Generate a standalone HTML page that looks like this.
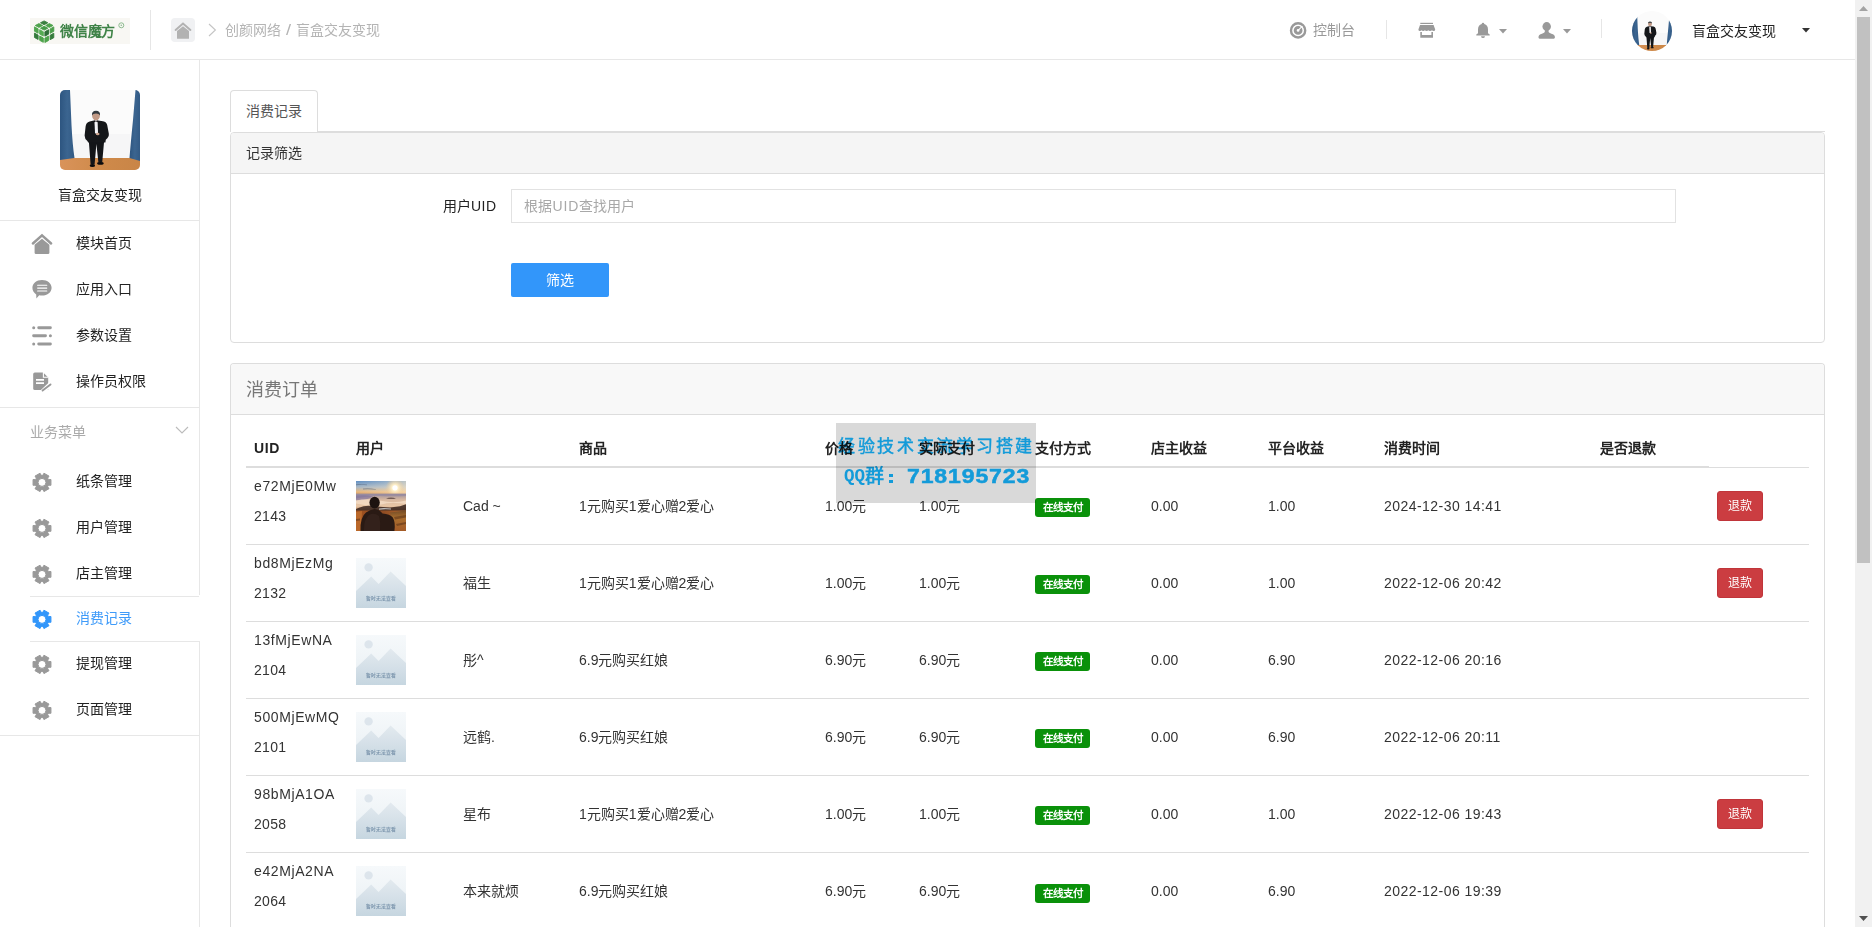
<!DOCTYPE html>
<html lang="zh-CN">
<head>
<meta charset="utf-8">
<title>消费记录 - 盲盒交友变现</title>
<style>
*{box-sizing:border-box;margin:0;padding:0}
html,body{width:1872px;height:927px;overflow:hidden;background:#fff}
body{position:relative;font-family:"Liberation Sans",sans-serif;font-size:14px;color:#222;line-height:20px}
.abs{position:absolute}
.t{position:absolute;white-space:nowrap;line-height:20px;height:20px}
svg{display:block}
/* header */
#hdr{position:absolute;left:0;top:0;width:1855px;height:60px;border-bottom:1px solid #e7e7e7;background:#fff}
.vdiv{position:absolute;width:1px;background:#e6e6e6}
.gray{color:#b4b4b4}
/* sidebar */
#side{position:absolute;left:0;top:60px;width:200px;height:867px;border-right:1px solid #e7e7e7;background:#fff}
.mi{position:absolute;left:0;width:199px;height:46px}
.mi .ic{position:absolute;left:31px;top:12px;width:22px;height:22px}
.mi .tx{position:absolute;left:76px;top:13px;line-height:20px;font-size:14px;color:#222;white-space:nowrap}
.hl{position:absolute;height:1px;background:#e7e7e7}
/* scrollbar */
#sb{position:absolute;left:1855px;top:0;width:17px;height:927px;background:#f1f1f1}
#sb .th{position:absolute;left:2px;top:17px;width:13px;height:546px;background:#c1c1c1}

/* main */
#tab{position:absolute;left:230px;top:90px;width:88px;height:42px;border:1px solid #ddd;border-bottom:none;border-radius:4px 4px 0 0;background:#fff;z-index:2}
#navline{position:absolute;left:230px;top:131px;width:1595px;height:1px;background:#ddd}
.panel{position:absolute;left:230px;width:1595px;border:1px solid #ddd;border-radius:4px;background:#fff}
.ph{border-bottom:1px solid #ddd;background:#f5f5f5;border-radius:3px 3px 0 0}
#inp{position:absolute;left:280px;top:56px;width:1165px;height:34px;border:1px solid #e2e2e2;background:#fff}
#btn{position:absolute;left:280px;top:130px;width:98px;height:34px;border-radius:2px;background:#3296fa;color:#fff;text-align:center;line-height:34px}
table{border-collapse:collapse;table-layout:fixed;position:absolute;left:15px;top:66px;width:1563px}
th{height:36px;padding:8px;text-align:left;font-weight:bold;color:#222;border-bottom:2px solid #ddd;line-height:20px;white-space:nowrap;vertical-align:bottom}
td{height:77px;padding:8px;border-top:1px solid #ddd;line-height:20px;color:#333;vertical-align:middle;white-space:nowrap}
td p{margin:0 0 10px;height:20px;letter-spacing:0.3px}
td p.u{letter-spacing:0.6px}
.dt{letter-spacing:0.45px}
.nm{letter-spacing:0.25px}
.ph2{height:51px;border-bottom:1px solid #ddd;background:#f8f8f8;border-radius:3px 3px 0 0}
.av{display:block;width:50px;height:50px}
.lb{display:inline-block;position:relative;top:1px;left:0;width:55px;height:19px;border-radius:3px;background:#0a910a;color:#fff;font-size:10.5px;font-weight:bold;line-height:18px;text-align:center;vertical-align:middle}
.rb{display:inline-block;width:46px;height:30px;border-radius:3px;background:#cb3d41;border:1px solid #c0353a;color:#fff;font-size:12px;line-height:28px;text-align:center;vertical-align:middle}
#wm{position:absolute;left:836px;top:423px;width:200px;height:80px;background:rgba(0,0,0,0.15)}
.wmt{color:#16b6ff;mix-blend-mode:multiply}
.wmd{background:#16b6ff;mix-blend-mode:multiply}
</style>
</head>
<body>

<!-- ================= HEADER ================= -->
<div id="hdr">
  <!-- logo -->
  <div class="abs" style="left:30px;top:18px;width:100px;height:26px;background:#f8f7f3">
    <svg class="abs" style="left:0;top:0" width="28" height="26" viewBox="0 0 28 26"><polygon points="14.11,2.91 17.78,4.80 14.14,6.69 10.47,4.80" fill="#3a7f40" stroke="#3a7f40" stroke-width="0.9" stroke-linejoin="round"/><polygon points="19.36,5.61 23.03,7.50 19.39,9.39 15.72,7.50" fill="#4fa34d" stroke="#4fa34d" stroke-width="0.9" stroke-linejoin="round"/><polygon points="8.91,5.61 12.58,7.50 8.94,9.39 5.27,7.50" fill="#4fa34d" stroke="#4fa34d" stroke-width="0.9" stroke-linejoin="round"/><polygon points="14.16,8.31 17.83,10.20 14.19,12.09 10.52,10.20" fill="#469b48" stroke="#469b48" stroke-width="0.9" stroke-linejoin="round"/><polygon points="4.48,8.87 8.12,10.86 8.12,15.23 4.48,13.24" fill="#50a54e" stroke="#50a54e" stroke-width="0.9" stroke-linejoin="round"/><polygon points="9.68,11.71 13.32,13.71 13.32,18.09 9.68,16.09" fill="#55aa52" stroke="#55aa52" stroke-width="0.9" stroke-linejoin="round"/><polygon points="4.48,15.11 8.12,17.11 8.12,21.48 4.48,19.49" fill="#347a3b" stroke="#347a3b" stroke-width="0.9" stroke-linejoin="round"/><polygon points="9.68,17.96 13.32,19.96 13.32,24.34 9.68,22.34" fill="#4ca24a" stroke="#4ca24a" stroke-width="0.9" stroke-linejoin="round"/><polygon points="14.89,13.72 18.56,11.73 18.56,16.18 14.89,18.17" fill="#2e6f37" stroke="#2e6f37" stroke-width="0.9" stroke-linejoin="round"/><polygon points="20.14,10.88 23.81,8.88 23.81,13.32 20.14,15.32" fill="#4a9e49" stroke="#4a9e49" stroke-width="0.9" stroke-linejoin="round"/><polygon points="14.89,20.07 18.56,18.08 18.56,22.52 14.89,24.52" fill="#4da34b" stroke="#4da34b" stroke-width="0.9" stroke-linejoin="round"/><polygon points="20.14,17.22 23.81,15.23 23.81,19.68 20.14,21.67" fill="#357c3c" stroke="#357c3c" stroke-width="0.9" stroke-linejoin="round"/></svg>
    <div class="t" style="left:30px;top:2.5px;font-size:14px;font-weight:bold;color:#3f8347;letter-spacing:-0.25px">微信魔方</div>
    <svg class="abs" style="left:87.5px;top:4px" width="7" height="7" viewBox="0 0 7 7"><circle cx="3.3" cy="3.3" r="2.5" fill="none" stroke="#8dbb8f" stroke-width="1"/><circle cx="3.3" cy="3.3" r="0.8" fill="#8dbb8f"/></svg>
  </div>
  <div class="vdiv" style="left:150px;top:10px;height:40px"></div>
  <!-- home -->
  <div class="abs" style="left:171px;top:18px;width:24px;height:24px;border-radius:4px;background:#f0f1f3">
    <svg class="abs" style="left:3px;top:3px" width="18" height="18" viewBox="0 0 18 18">
      <path d="M1.6,8.9 L9,2.5 L16.4,8.9" fill="none" stroke="#b2b2b2" stroke-width="2" stroke-linecap="round" stroke-linejoin="miter"/>
      <path d="M3,10 L9,5.2 L15,10 V17.2 Q15,17.8 14.4,17.8 H3.6 Q3,17.8 3,17.2 Z" fill="#b2b2b2"/>
    </svg>
  </div>
  <svg class="abs" style="left:207px;top:23px" width="10" height="14" viewBox="0 0 10 14"><path d="M2,1 L8.4,7 L2,13" fill="none" stroke="#c4c4c4" stroke-width="1.1"/></svg>
  <div class="t gray" style="left:225px;top:20px">创颜网络</div>
  <div class="t gray" style="left:285.5px;top:20px;transform:scaleX(1.3);transform-origin:0 50%">/</div>
  <div class="t gray" style="left:296px;top:20px">盲盒交友变现</div>

  <!-- right tools -->
  <svg class="abs" style="left:1289px;top:22px" width="18" height="17" viewBox="0 0 18 17">
    <circle cx="9.1" cy="8.4" r="7.1" fill="none" stroke="#999" stroke-width="2.4"/>
    <circle cx="9.1" cy="8.4" r="2.9" fill="none" stroke="#999" stroke-width="3"/>
    <path d="M9.1,8.4 L13.4,4.1" stroke="#fff" stroke-width="1.1"/>
  </svg>
  <div class="t" style="left:1313px;top:20px;color:#999">控制台</div>
  <div class="vdiv" style="left:1386px;top:20px;height:19px"></div>
  <!-- shop -->
  <svg class="abs" style="left:1418px;top:22px" width="18" height="17" viewBox="0 0 18 17">
    <rect x="2.3" y="0.8" width="12.7" height="1.2" fill="#999"/>
    <path d="M2,2.9 H15.6 L17.2,7.4 Q17.2,9 15.6,9 Q14.4,9 14,8.2 Q13.4,9 12,9 Q10.8,9 10.3,8.2 Q9.8,9 8.6,9 Q7.4,9 6.9,8.2 Q6.4,9 5.2,9 Q4,9 3.6,8.2 Q3.2,9 2,9 Q0.4,9 0.4,7.4 Z" fill="#999"/>
    <path d="M2.3,10 H3.9 V13 H13.4 V10 H15 V15.8 H2.3 Z" fill="#999"/>
  </svg>
  <!-- bell -->
  <svg class="abs" style="left:1475px;top:22px" width="16" height="17" viewBox="0 0 16 17">
    <path d="M8,0.7 Q9.2,0.7 9.3,2 Q13,3.1 13,7.6 V11.2 L14.7,12.5 V13.6 H1.3 V12.5 L3,11.2 V7.6 Q3,3.1 6.7,2 Q6.8,0.7 8,0.7 Z" fill="#999"/>
    <path d="M6,14.2 H10 Q9.8,16.1 8,16.1 Q6.2,16.1 6,14.2 Z" fill="#999"/>
  </svg>
  <svg class="abs" style="left:1499px;top:29px" width="8" height="5" viewBox="0 0 8 5"><path d="M0,0 H8 L4,4.4 Z" fill="#999"/></svg>
  <!-- user -->
  <svg class="abs" style="left:1538px;top:22px" width="18" height="17" viewBox="0 0 18 17">
    <ellipse cx="8.7" cy="4.5" rx="4.25" ry="4.4" fill="#999"/>
    <path d="M6.8,7.6 H10.6 V10 Q10.8,10.9 13.4,11.7 Q16.9,12.8 16.9,15 V15.6 Q16.9,16.7 15.8,16.7 H1.6 Q0.5,16.7 0.5,15.6 V15 Q0.5,12.8 4,11.7 Q6.6,10.9 6.8,10 Z" fill="#999"/>
  </svg>
  <svg class="abs" style="left:1563px;top:29px" width="8" height="5" viewBox="0 0 8 5"><path d="M0,0 H8 L4,4.4 Z" fill="#999"/></svg>
  <div class="vdiv" style="left:1601px;top:19px;height:19px"></div>
  <!-- avatar small -->
  <svg class="abs" style="left:1632px;top:11px" width="40" height="40" viewBox="0 0 80 80">
    <defs><clipPath id="cc"><circle cx="40" cy="40" r="40"/></clipPath></defs>
    <g clip-path="url(#cc)"><use href="#photo"/></g>
  </svg>
  <div class="t" style="left:1692px;top:21px;color:#222">盲盒交友变现</div>
  <svg class="abs" style="left:1802px;top:28px" width="8" height="5" viewBox="0 0 8 5"><path d="M0,0 H8 L4,4.6 Z" fill="#333"/></svg>
</div>

<!-- shared photo definition -->
<svg width="0" height="0" style="position:absolute">
  <defs>
    <linearGradient id="flr" x1="0" y1="0" x2="1" y2="0">
      <stop offset="0" stop-color="#d9935a"/><stop offset="0.5" stop-color="#cf8a4a"/><stop offset="1" stop-color="#c98547"/>
    </linearGradient>
    <linearGradient id="curt" x1="0" y1="0" x2="1" y2="0">
      <stop offset="0" stop-color="#2d5580"/><stop offset="0.5" stop-color="#3b6590"/><stop offset="1" stop-color="#325a85"/>
    </linearGradient>
    <g id="photo">
      <rect x="0" y="0" width="80" height="80" fill="#fbfbfb"/>
      <rect x="12" y="44" width="58" height="25" fill="#f6f6f7"/>
      <rect x="0" y="68" width="80" height="12" fill="url(#flr)"/>
      <path d="M0,0 H10 L11.5,35 Q12.5,55 14.5,68 L0,70 Z" fill="url(#curt)"/>
      <path d="M80,0 H75.5 L73,30 Q70.5,55 69.5,68 L80,71 Z" fill="url(#curt)"/>
      <!-- man -->
      <ellipse cx="36" cy="25.8" rx="3.9" ry="4.5" fill="#c29a86"/>
      <path d="M32,25.4 Q31.6,20.8 36,20.8 Q40.4,20.8 40,25.4 Q39.2,23.4 36,23.4 Q32.8,23.4 32,25.4 Z" fill="#353b40"/>
      <path d="M34.2,29.2 H37.6 V31.2 H34.2 Z" fill="#c29a86"/>
      <!-- legs -->
      <path d="M28.6,48 L30.6,74.6 L34.6,74.6 L36.4,54 L38.4,72.6 L42.2,72.6 L44.4,48 Z" fill="#131518"/>
      <!-- jacket -->
      <path d="M33.8,30.4 L29.6,31.4 Q26,32.4 25.6,36.4 L24.6,45.4 Q24.6,48.6 27.4,51 L28.2,52.4 L45.4,52.4 L45.8,49.8 Q49.4,47 48.8,43.6 L47.2,35 Q46.6,32 43,31.2 L38,30.4 Z" fill="#15171a"/>
      <path d="M34.4,30.6 L37.6,30.6 L38,42.6 L36.2,44.6 L35,42.6 Z" fill="#f4f4f7"/>
      <path d="M34,30.4 L35.9,31.3 L37.9,30.4 L37.9,32.2 L35.9,31.5 L34,32.2 Z" fill="#0c0c0e"/>
      <ellipse cx="37.7" cy="44" rx="1.8" ry="1.3" fill="#c9a18c"/>
      <ellipse cx="32.4" cy="75.4" rx="2.7" ry="1.5" fill="#0b0b0d"/>
      <ellipse cx="40.4" cy="73.4" rx="3.3" ry="1.3" fill="#0b0b0d"/>
    </g>
  </defs>
</svg>

<!-- ================= SIDEBAR ================= -->
<div id="side">
  <svg class="abs" style="left:60px;top:30px" width="80" height="80" viewBox="0 0 80 80">
    <defs><clipPath id="cr"><rect x="0" y="0" width="80" height="80" rx="5" ry="5"/></clipPath></defs>
    <g clip-path="url(#cr)"><use href="#photo"/></g>
  </svg>
  <div class="t" style="left:58px;top:125px;color:#222">盲盒交友变现</div>
  <div class="hl" style="left:0;top:160px;width:199px"></div>
  <div class="mi" style="top:160px"><svg class="ic" style="top:13px" viewBox="0 0 22 22"><path d="M1.9,10.5 L11,2.4 L20.1,10.5" fill="none" stroke="#999" stroke-width="2.5" stroke-linecap="round" stroke-linejoin="miter"/><path d="M3.6,11.7 L11,5.8 L18.4,11.7 V19.7 Q18.4,21 17.1,21 H4.9 Q3.6,21 3.6,19.7 Z" fill="#999"/></svg><span class="tx">模块首页</span></div>
  <div class="mi" style="top:206px"><svg class="ic" viewBox="0 0 22 22"><path d="M11,2 C16.6,2 20.6,5.4 20.6,9.8 C20.6,14.2 16.6,17.6 11,17.6 C10,17.6 9,17.5 8.2,17.3 L5.4,20.6 L5.2,16.4 C2.8,15 1.4,12.6 1.4,9.8 C1.4,5.4 5.4,2 11,2 Z" fill="#999"/><path d="M6.6,7.3 H15.8 M6.6,10.1 H15.8 M6.6,12.9 H15.8" stroke="#fff" stroke-width="1.05" stroke-linecap="round"/></svg><span class="tx">应用入口</span></div>
  <div class="mi" style="top:252px"><svg class="ic" viewBox="0 0 22 22"><path d="M7.7,3.7 H19.4 M2.6,11.8 H14.5 M7.7,20 H19.4" stroke="#999" stroke-width="2.9" stroke-linecap="round" fill="none"/><circle cx="2.7" cy="3.7" r="1.5" fill="#999"/><circle cx="19.4" cy="11.8" r="1.5" fill="#999"/><circle cx="2.7" cy="20" r="1.5" fill="#999"/></svg><span class="tx">参数设置</span></div>
  <div class="mi" style="top:298px"><svg class="ic" viewBox="0 0 22 22"><path d="M3.8,2.4 H12.2 L17.2,7.4 V20 H3.8 Q2.2,20 2.2,18.4 V4 Q2.2,2.4 3.8,2.4 Z" fill="#999"/><path d="M12.4,2 V7.2 H17.6" fill="none" stroke="#fff" stroke-width="1.1"/><path d="M5,9.9 H13 M5,13.1 H13" stroke="#fff" stroke-width="1.7"/><path d="M9.6,23.4 L21,12.6" stroke="#fff" stroke-width="4.6"/><path d="M11.6,20.6 L19.5,14.4" stroke="#999" stroke-width="1.9" stroke-linecap="round"/></svg><span class="tx">操作员权限</span></div>
  <div class="hl" style="left:0;top:347px;width:199px"></div>
  <div class="t" style="left:30px;top:362px;color:#aaa">业务菜单</div>
  <svg class="abs" style="left:175px;top:366px" width="14" height="8" viewBox="0 0 14 8"><path d="M1,1 L7,7 L13,1" fill="none" stroke="#bbb" stroke-width="1.1"/></svg>
  <div class="mi" style="top:398px"><svg class="ic" style="top:13px" viewBox="0 0 22 22"><path fill="#999" stroke="#999" stroke-width="1.0" stroke-linejoin="round" fill-rule="evenodd" d="M17.54,8.63 L19.94,8.50 L19.94,14.30 L17.54,14.17 L16.67,15.67 L17.99,17.69 L12.95,20.59 L11.87,18.45 L10.13,18.45 L9.05,20.59 L4.01,17.69 L5.33,15.67 L4.46,14.17 L2.06,14.30 L2.06,8.50 L4.46,8.63 L5.33,7.13 L4.01,5.11 L9.05,2.21 L10.13,4.35 L11.87,4.35 L12.95,2.21 L17.99,5.11 L16.67,7.13 Z M7.00,11.40 a4.0,4.0 0 1 0 8.0,0 a4.0,4.0 0 1 0 -8.0,0 Z"/></svg><span class="tx">纸条管理</span></div>
  <div class="mi" style="top:444px"><svg class="ic" style="top:13px" viewBox="0 0 22 22"><path fill="#999" stroke="#999" stroke-width="1.0" stroke-linejoin="round" fill-rule="evenodd" d="M17.54,8.63 L19.94,8.50 L19.94,14.30 L17.54,14.17 L16.67,15.67 L17.99,17.69 L12.95,20.59 L11.87,18.45 L10.13,18.45 L9.05,20.59 L4.01,17.69 L5.33,15.67 L4.46,14.17 L2.06,14.30 L2.06,8.50 L4.46,8.63 L5.33,7.13 L4.01,5.11 L9.05,2.21 L10.13,4.35 L11.87,4.35 L12.95,2.21 L17.99,5.11 L16.67,7.13 Z M7.00,11.40 a4.0,4.0 0 1 0 8.0,0 a4.0,4.0 0 1 0 -8.0,0 Z"/></svg><span class="tx">用户管理</span></div>
  <div class="mi" style="top:490px"><svg class="ic" style="top:13px" viewBox="0 0 22 22"><path fill="#999" stroke="#999" stroke-width="1.0" stroke-linejoin="round" fill-rule="evenodd" d="M17.54,8.63 L19.94,8.50 L19.94,14.30 L17.54,14.17 L16.67,15.67 L17.99,17.69 L12.95,20.59 L11.87,18.45 L10.13,18.45 L9.05,20.59 L4.01,17.69 L5.33,15.67 L4.46,14.17 L2.06,14.30 L2.06,8.50 L4.46,8.63 L5.33,7.13 L4.01,5.11 L9.05,2.21 L10.13,4.35 L11.87,4.35 L12.95,2.21 L17.99,5.11 L16.67,7.13 Z M7.00,11.40 a4.0,4.0 0 1 0 8.0,0 a4.0,4.0 0 1 0 -8.0,0 Z"/></svg><span class="tx">店主管理</span></div>
  <div class="mi act" style="top:535px;width:201px;background:#fff"><svg class="ic" style="top:13px" viewBox="0 0 22 22"><path fill="#3296fa" stroke="#3296fa" stroke-width="1.0" stroke-linejoin="round" fill-rule="evenodd" d="M17.54,8.63 L19.94,8.50 L19.94,14.30 L17.54,14.17 L16.67,15.67 L17.99,17.69 L12.95,20.59 L11.87,18.45 L10.13,18.45 L9.05,20.59 L4.01,17.69 L5.33,15.67 L4.46,14.17 L2.06,14.30 L2.06,8.50 L4.46,8.63 L5.33,7.13 L4.01,5.11 L9.05,2.21 L10.13,4.35 L11.87,4.35 L12.95,2.21 L17.99,5.11 L16.67,7.13 Z M7.00,11.40 a4.0,4.0 0 1 0 8.0,0 a4.0,4.0 0 1 0 -8.0,0 Z"/></svg><span class="tx" style="color:#3f9bf9">消费记录</span></div>
  <div class="mi" style="top:580px"><svg class="ic" style="top:13px" viewBox="0 0 22 22"><path fill="#999" stroke="#999" stroke-width="1.0" stroke-linejoin="round" fill-rule="evenodd" d="M17.54,8.63 L19.94,8.50 L19.94,14.30 L17.54,14.17 L16.67,15.67 L17.99,17.69 L12.95,20.59 L11.87,18.45 L10.13,18.45 L9.05,20.59 L4.01,17.69 L5.33,15.67 L4.46,14.17 L2.06,14.30 L2.06,8.50 L4.46,8.63 L5.33,7.13 L4.01,5.11 L9.05,2.21 L10.13,4.35 L11.87,4.35 L12.95,2.21 L17.99,5.11 L16.67,7.13 Z M7.00,11.40 a4.0,4.0 0 1 0 8.0,0 a4.0,4.0 0 1 0 -8.0,0 Z"/></svg><span class="tx">提现管理</span></div>
  <div class="mi" style="top:626px"><svg class="ic" style="top:13px" viewBox="0 0 22 22"><path fill="#999" stroke="#999" stroke-width="1.0" stroke-linejoin="round" fill-rule="evenodd" d="M17.54,8.63 L19.94,8.50 L19.94,14.30 L17.54,14.17 L16.67,15.67 L17.99,17.69 L12.95,20.59 L11.87,18.45 L10.13,18.45 L9.05,20.59 L4.01,17.69 L5.33,15.67 L4.46,14.17 L2.06,14.30 L2.06,8.50 L4.46,8.63 L5.33,7.13 L4.01,5.11 L9.05,2.21 L10.13,4.35 L11.87,4.35 L12.95,2.21 L17.99,5.11 L16.67,7.13 Z M7.00,11.40 a4.0,4.0 0 1 0 8.0,0 a4.0,4.0 0 1 0 -8.0,0 Z"/></svg><span class="tx">页面管理</span></div>
  <div class="hl" style="left:30px;top:536px;width:169px"></div>
  <div class="hl" style="left:30px;top:581px;width:169px"></div>
  <div class="hl" style="left:0;top:675px;width:199px"></div>
</div>


<!-- ================= MAIN ================= -->
<svg width="0" height="0" style="position:absolute"><defs>
  <linearGradient id="phg" x1="0" y1="0" x2="0" y2="1"><stop offset="0" stop-color="#f6f9fb"/><stop offset="0.5" stop-color="#eff4f7"/><stop offset="1" stop-color="#e6edf2"/></linearGradient>
  <linearGradient id="phm" x1="0" y1="0" x2="0" y2="1"><stop offset="0" stop-color="#e3eaef"/><stop offset="0.5" stop-color="#d5e0e8"/><stop offset="1" stop-color="#c6d6e0"/></linearGradient>
  <linearGradient id="sky" x1="0" y1="0" x2="0" y2="1"><stop offset="0" stop-color="#5f8fc4"/><stop offset="0.45" stop-color="#a9b7c4"/><stop offset="0.8" stop-color="#e8b77c"/><stop offset="1" stop-color="#d89c5e"/></linearGradient>
  <radialGradient id="sun" cx="0.5" cy="0.5" r="0.5"><stop offset="0" stop-color="#fffdf2"/><stop offset="0.35" stop-color="#fff0c8" stop-opacity="0.95"/><stop offset="1" stop-color="#f3c98c" stop-opacity="0"/></radialGradient>
  <linearGradient id="cloud" x1="0" y1="0" x2="0" y2="1"><stop offset="0" stop-color="#9d8f9c"/><stop offset="0.35" stop-color="#d9b9a0"/><stop offset="0.7" stop-color="#e9c7a6"/><stop offset="1" stop-color="#a9704a"/></linearGradient>
  <linearGradient id="gnd" x1="0" y1="0" x2="1" y2="0"><stop offset="0" stop-color="#a2521f"/><stop offset="0.5" stop-color="#8e4a22"/><stop offset="1" stop-color="#b0672d"/></linearGradient>
  <linearGradient id="hz" x1="0" y1="0" x2="1" y2="0"><stop offset="0" stop-color="#fff1d6" stop-opacity="0"/><stop offset="0.55" stop-color="#fff1d6" stop-opacity="0.25"/><stop offset="1" stop-color="#ffe9c4" stop-opacity="0.6"/></linearGradient>
  <linearGradient id="grs" x1="0" y1="0" x2="0" y2="1"><stop offset="0" stop-color="#6e4a26"/><stop offset="0.35" stop-color="#a9702f"/><stop offset="1" stop-color="#a35a27"/></linearGradient>
  <g id="sunset">
    <rect width="50" height="50" fill="#b98a5e"/>
    <rect width="50" height="13.5" fill="url(#sky)"/>
    <rect width="50" height="13.5" fill="url(#hz)"/>
    <path d="M0,3.2 Q5,2.4 11,3.6 L11,4.2 Q5,3.4 0,4.2 Z M7,7.6 Q13,6.8 20,8.2 L20,8.8 Q13,7.8 7,8.4 Z" fill="#56657a" opacity="0.55"/>
    <circle cx="39" cy="6.8" r="9.5" fill="url(#sun)"/>
    <circle cx="39" cy="6.8" r="2.6" fill="#ffffff"/>
    <rect y="12.6" width="50" height="18" fill="url(#cloud)"/>
    <path d="M0,13 H50 V15 Q36,15.6 24,15 T0,17.4 Z" fill="#8f86a0" opacity="0.6"/>
    <path d="M0,14.6 Q9,13.4 17,15.4 Q10,19.8 0,19.4 Z" fill="#7c6fa0" opacity="0.6"/>
    <path d="M0,19.6 Q12,17 25,19.8 T50,19.6 V23 Q35,21 25,23.5 T0,22.4 Z" fill="#f3dcc4" opacity="0.85"/>
    <path d="M30,17.4 Q35,15.6 40,17.4 Q36,18.6 30,17.4 Z" fill="#4e3a36" opacity="0.7"/>
    <path d="M3,26.8 Q10,23.4 20,25.6 L34,26.6 L44,25.2 L50,23.2 V31 H0 V28 Z" fill="#3a2720" opacity="0.88"/>
    <path d="M23,27.4 Q28,26.4 35,27.6 L35,28.6 Q28,28 23,28.8 Z" fill="#e6ebee" opacity="0.75"/>
    <rect y="29.5" width="50" height="20.5" fill="url(#gnd)"/>
    <path d="M34,31.4 L50,29.6 V50 H39 Z" fill="url(#grs)" opacity="0.9"/>
    <path d="M0,31 L6,30 L5,50 H0 Z" fill="#c4722f" opacity="0.7"/>
    <path d="M38,36 L50,34 V36.5 L39,38.5 Z M40,43 L50,41 V43 L41,45 Z M0,38 L4,37.4 V39.4 L0,40 Z" fill="#5a3218" opacity="0.55"/>
    <ellipse cx="18.6" cy="21.6" rx="5.2" ry="5.8" fill="#1d1310"/>
    <path d="M4.5,50 Q4,36 10,31.5 Q14,28.5 18.4,28 Q23.5,28.4 26.5,32.5 Q34,33 36.8,36.6 Q39.6,41 38.4,50 Z" fill="#2a1a14"/>
    <path d="M8,48 Q8,38 13,34 Q18,31 23,35 Q25,42 24,50 H8 Z" fill="#3a2620" opacity="0.6"/>
  </g>
</defs></svg>

<div id="tab"><div class="t" style="left:15px;top:10px;color:#555">消费记录</div></div>
<div id="navline"></div>

<div class="panel" style="top:132px;height:211px">
  <div class="ph" style="height:41px"><div class="t" style="left:15px;top:10px;color:#333">记录筛选</div></div>
  <div class="t" style="left:212px;top:63px;color:#222">用户<span style="letter-spacing:0.5px">UID</span></div>
  <div id="inp"><div class="t" style="left:12px;top:6px;color:#a8a8a8">根据<span style="letter-spacing:0.9px;margin-left:0.5px">UID</span>查找用户</div></div>
  <div id="btn">筛选</div>
</div>

<div class="panel" style="top:363px;height:580px;border-bottom:none;border-radius:4px 4px 0 0">
  <div class="ph2"><div class="t" style="left:15px;top:15px;font-size:18px;color:#777;line-height:22px;height:22px">消费订单</div></div>
<table>
<colgroup><col style="width:102px"><col style="width:107px"><col style="width:116px"><col style="width:246px"><col style="width:94px"><col style="width:116px"><col style="width:116px"><col style="width:117px"><col style="width:116px"><col style="width:216px"><col style="width:117px"><col style="width:100px"></colgroup>
<thead><tr><th style="letter-spacing:0.6px">UID</th><th colspan="2">用户</th><th>商品</th><th>价格</th><th>实际支付</th><th>支付方式</th><th>店主收益</th><th>平台收益</th><th>消费时间</th><th>是否退款</th><td style="border:none;height:36px"></td></tr></thead>
<tbody>
<tr><td><p class="u">e72MjE0Mw</p><p>2143</p></td><td><svg class="av" viewBox="0 0 50 50"><use href="#sunset"/></svg></td><td>Cad ~</td><td>1元购买1爱心赠2爱心</td><td>1.00元</td><td>1.00元</td><td><span class="lb">在线支付</span></td><td>0.00</td><td>1.00</td><td class="dt">2024-12-30 14:41</td><td></td><td><span class="rb">退款</span></td></tr>
<tr><td><p class="u">bd8MjEzMg</p><p>2132</p></td><td><svg class="av" viewBox="0 0 50 50"><rect width="50" height="50" fill="url(#phg)"/><circle cx="12.6" cy="9.4" r="4.2" fill="#dde5ec"/><path d="M0,33 L15.2,18.6 L22.6,26 L34.6,13.4 L50,28 V50 H0 Z" fill="url(#phm)"/><text x="25.4" y="42" text-anchor="middle" font-size="4.8" font-weight="bold" fill="#7f98af" style="font-family:'Liberation Sans',sans-serif">暂时无法查看</text></svg></td><td>福生</td><td>1元购买1爱心赠2爱心</td><td>1.00元</td><td>1.00元</td><td><span class="lb">在线支付</span></td><td>0.00</td><td>1.00</td><td class="dt">2022-12-06 20:42</td><td></td><td><span class="rb">退款</span></td></tr>
<tr><td><p class="u">13fMjEwNA</p><p>2104</p></td><td><svg class="av" viewBox="0 0 50 50"><rect width="50" height="50" fill="url(#phg)"/><circle cx="12.6" cy="9.4" r="4.2" fill="#dde5ec"/><path d="M0,33 L15.2,18.6 L22.6,26 L34.6,13.4 L50,28 V50 H0 Z" fill="url(#phm)"/><text x="25.4" y="42" text-anchor="middle" font-size="4.8" font-weight="bold" fill="#7f98af" style="font-family:'Liberation Sans',sans-serif">暂时无法查看</text></svg></td><td>彤^</td><td>6.9元购买红娘</td><td>6.90元</td><td>6.90元</td><td><span class="lb">在线支付</span></td><td>0.00</td><td>6.90</td><td class="dt">2022-12-06 20:16</td><td></td><td></td></tr>
<tr><td><p class="u">500MjEwMQ</p><p>2101</p></td><td><svg class="av" viewBox="0 0 50 50"><rect width="50" height="50" fill="url(#phg)"/><circle cx="12.6" cy="9.4" r="4.2" fill="#dde5ec"/><path d="M0,33 L15.2,18.6 L22.6,26 L34.6,13.4 L50,28 V50 H0 Z" fill="url(#phm)"/><text x="25.4" y="42" text-anchor="middle" font-size="4.8" font-weight="bold" fill="#7f98af" style="font-family:'Liberation Sans',sans-serif">暂时无法查看</text></svg></td><td>远鹤.</td><td>6.9元购买红娘</td><td>6.90元</td><td>6.90元</td><td><span class="lb">在线支付</span></td><td>0.00</td><td>6.90</td><td class="dt">2022-12-06 20:11</td><td></td><td></td></tr>
<tr><td><p class="u">98bMjA1OA</p><p>2058</p></td><td><svg class="av" viewBox="0 0 50 50"><rect width="50" height="50" fill="url(#phg)"/><circle cx="12.6" cy="9.4" r="4.2" fill="#dde5ec"/><path d="M0,33 L15.2,18.6 L22.6,26 L34.6,13.4 L50,28 V50 H0 Z" fill="url(#phm)"/><text x="25.4" y="42" text-anchor="middle" font-size="4.8" font-weight="bold" fill="#7f98af" style="font-family:'Liberation Sans',sans-serif">暂时无法查看</text></svg></td><td>星布</td><td>1元购买1爱心赠2爱心</td><td>1.00元</td><td>1.00元</td><td><span class="lb">在线支付</span></td><td>0.00</td><td>1.00</td><td class="dt">2022-12-06 19:43</td><td></td><td><span class="rb">退款</span></td></tr>
<tr><td><p class="u">e42MjA2NA</p><p>2064</p></td><td><svg class="av" viewBox="0 0 50 50"><rect width="50" height="50" fill="url(#phg)"/><circle cx="12.6" cy="9.4" r="4.2" fill="#dde5ec"/><path d="M0,33 L15.2,18.6 L22.6,26 L34.6,13.4 L50,28 V50 H0 Z" fill="url(#phm)"/><text x="25.4" y="42" text-anchor="middle" font-size="4.8" font-weight="bold" fill="#7f98af" style="font-family:'Liberation Sans',sans-serif">暂时无法查看</text></svg></td><td>本来就烦</td><td>6.9元购买红娘</td><td>6.90元</td><td>6.90元</td><td><span class="lb">在线支付</span></td><td>0.00</td><td>6.90</td><td class="dt">2022-12-06 19:39</td><td></td><td></td></tr>
</tbody></table>
</div>

<div id="wm"></div>
<div class="t wmt" style="left:838px;top:434.5px;font-size:17px;letter-spacing:2.7px;line-height:24px;height:24px;font-family:'Liberation Serif',serif;-webkit-text-stroke:0.45px #16b6ff">经验技术交流学习搭建</div>
<div class="t wmt" style="left:844px;top:464px;font-size:17.5px;font-weight:bold;line-height:24px;height:24px;font-family:'Liberation Mono',monospace">QQ</div>
<div class="t wmt" style="left:865px;top:465px;font-size:19px;font-weight:bold;line-height:24px;height:24px">群</div>
<div class="abs wmd" style="left:889px;top:474px;width:3.5px;height:3.2px"></div>
<div class="abs wmd" style="left:889px;top:480px;width:3.5px;height:3.2px"></div>
<div class="t wmt" style="left:907px;top:464px;font-size:20px;font-weight:bold;line-height:24px;height:24px;letter-spacing:0.77px;transform:scaleX(1.15);transform-origin:0 50%;-webkit-text-stroke:0.5px #16b6ff">718195723</div>

<!-- scrollbar -->
<div id="sb">
  <div class="th"></div>
  <svg class="abs" style="left:4px;top:6px" width="9" height="5" viewBox="0 0 9 5"><path d="M4.5,0 L9,5 H0 Z" fill="#a3a3a3"/></svg>
  <svg class="abs" style="left:4px;top:916px" width="9" height="5" viewBox="0 0 9 5"><path d="M0,0 H9 L4.5,5 Z" fill="#505050"/></svg>
</div>

</body>
</html>
